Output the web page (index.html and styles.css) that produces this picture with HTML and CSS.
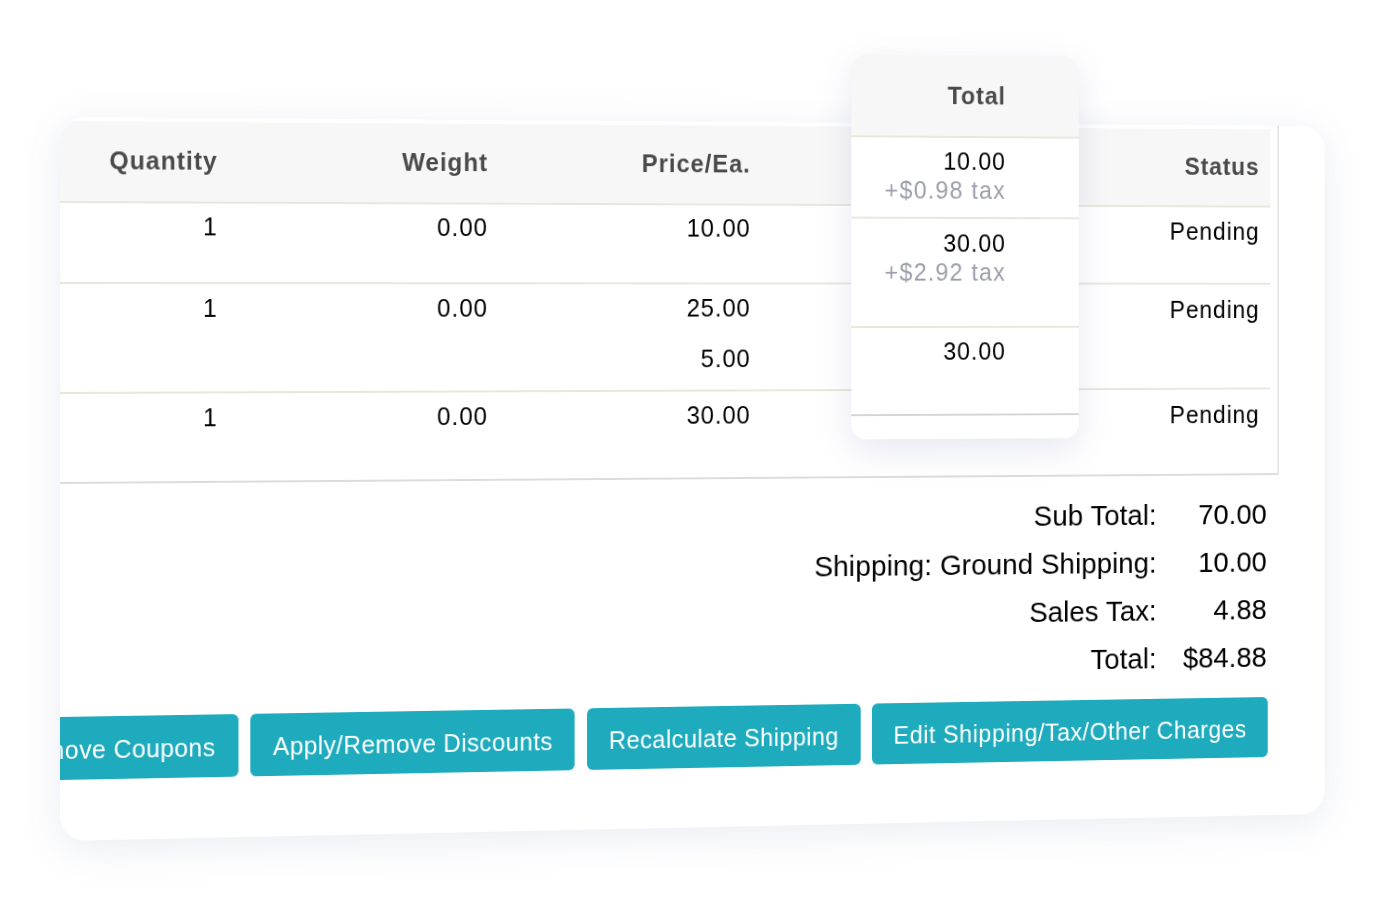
FILE: index.html
```html
<!DOCTYPE html>
<html>
<head>
    <title>Order items</title>
    <link rel="stylesheet" href="styles.css">
</head>
<body>
    <div class="stage">
        <div class="card">
            <div class="table-wrap">
                <table class="items">
                    <colgroup>
                        <col class="col-qty">
                        <col class="col-weight">
                        <col class="col-price">
                        <col class="col-total">
                        <col class="col-status">
                    </colgroup>
                    <thead>
                        <tr>
                            <th>Quantity</th>
                            <th>Weight</th>
                            <th>Price/Ea.</th>
                            <th></th>
                            <th>Status</th>
                        </tr>
                    </thead>
                    <tbody>
                        <tr class="row-one">
                            <td>1</td>
                            <td>0.00</td>
                            <td>10.00</td>
                            <td></td>
                            <td>Pending</td>
                        </tr>
                        <tr class="row-two">
                            <td>1</td>
                            <td>0.00</td>
                            <td>25.00<div class="price-extra">5.00</div></td>
                            <td></td>
                            <td>Pending</td>
                        </tr>
                        <tr class="row-three">
                            <td>1</td>
                            <td>0.00</td>
                            <td>30.00</td>
                            <td></td>
                            <td>Pending</td>
                        </tr>
                    </tbody>
                </table>
            </div>

            <div class="summary">
                <span>Sub Total:</span><span>70.00</span>
                <span>Shipping: Ground Shipping:</span><span>10.00</span>
                <span>Sales Tax:</span><span>4.88</span>
                <span>Total:</span><span>$84.88</span>
            </div>

            <div class="actions">
                <button class="action-btn">Apply/Remove Coupons</button>
                <button class="action-btn">Apply/Remove Discounts</button>
                <button class="action-btn">Recalculate Shipping</button>
                <button class="action-btn action-btn-wide">Edit Shipping/Tax/Other Charges</button>
            </div>
        </div>

        <!-- highlighted column, floats over the table -->
        <div class="total-pop">
            <div class="pop-head">Total</div>
            <div class="pop-row pop-row-one">10.00<div class="tax">+$0.98 tax</div></div>
            <div class="pop-row pop-row-two">30.00<div class="tax">+$2.92 tax</div></div>
            <div class="pop-row pop-row-three">30.00</div>
        </div>
    </div>
</body>
</html>
```

FILE: styles.css
```css
html, body {
    margin: 0;
    height: 100%;
    overflow: hidden;
    background-color: #fff;
}

body {
    padding: 117px 0 0 60px;
    box-sizing: border-box;
    font-family: "Liberation Sans", Arial, sans-serif;
    color: #000;
}

.stage {
    position: relative;
    width: 1333px;
    height: 724px;
    transform-origin: 0 181px;
    transform: perspective(1326px) rotateY(3deg);
}

.card {
    height: 100%;
    background-color: #fff;
    border-radius: 26px;
    overflow: hidden;
}

/* soft halo behind the card */
.stage::before {
    content: "";
    position: absolute;
    inset: 0;
    z-index: -1;
    border-radius: 26px;
    box-shadow: 0 8px 40px rgba(85, 95, 160, 0.12);
}

.table-wrap {
    box-sizing: border-box;
    width: 1282px;
    height: 367px;
    padding: 4px 8px 0 0;
    border-right: 1px solid #cfcfcf;
    border-bottom: 2px solid #dcdcdc;
}

.items {
    width: 1273px;
    table-layout: fixed;
    border-collapse: separate;
    border-spacing: 0;
    font-size: 25px;
    letter-spacing: 1px;
}

.col-qty { width: 172px; }
.col-weight { width: 277px; }
.col-price { width: 275px; }
.col-total { width: 270px; }
.col-status { width: 279px; }

.items th {
    height: 82px;
    padding: 0 13px 2px 0;
    box-sizing: border-box;
    text-align: right;
    background-color: #f7f7f7;
    color: #4a4a4a;
    border-bottom: 2px solid #e9e7dc;
}

.items td {
    padding: 8px 13px 0 0;
    box-sizing: border-box;
    text-align: right;
    vertical-align: top;
    line-height: 30px;
}

.items th:last-child,
.items td:last-child {
    padding-right: 12px;
}

.items td:last-child {
    line-height: 34px;
}

.row-one td,
.row-two td {
    border-bottom: 2px solid #e9e7dc;
}

.row-one td { height: 81px; }
.row-two td { height: 110px; padding-top: 9px; }
.row-three td { height: 89px; padding-top: 9px; }

.price-extra {
    margin-top: 22px;
}

.summary {
    display: grid;
    grid-template-columns: auto 96px;
    column-gap: 25px;
    justify-content: end;
    padding: 16px 64px 0 0;
    font-size: 30px;
    letter-spacing: 0.1px;
    line-height: 50px;
    text-align: right;
}

.actions {
    display: flex;
    justify-content: flex-end;
    gap: 12.5px;
    margin-top: 17px;
    padding-right: 63px;
}

.action-btn {
    flex: none;
    height: 63px;
    padding: 4px 23px 0;
    border: none;
    border-radius: 6px;
    background-color: #1eabbd;
    color: #fff;
    font-family: inherit;
    font-size: 25px;
    letter-spacing: 0.4px;
}

.action-btn-wide {
    letter-spacing: 0.64px;
}

.total-pop {
    position: absolute;
    z-index: 1;
    top: -71px;
    left: 818px;
    width: 245px;
    height: 398px;
    background-color: #fff;
    border-radius: 16px;
    overflow: hidden;
    font-size: 25px;
    letter-spacing: 1px;
    text-align: right;
}

.stage::after {
    content: "";
    position: absolute;
    top: -71px;
    left: 818px;
    width: 245px;
    height: 398px;
    border-radius: 16px;
    box-shadow: 0 12px 36px rgba(85, 95, 160, 0.14);
}

.pop-head {
    box-sizing: border-box;
    height: 86px;
    line-height: 84px;
    padding-right: 79px;
    font-weight: bold;
    color: #4a4a4a;
    background-color: #f7f7f7;
    border-bottom: 2px solid #e9e7dc;
}

.pop-row {
    box-sizing: border-box;
    padding: 9px 79px 0 0;
    line-height: 30px;
    border-bottom: 2px solid #e9e7dc;
}

.pop-row-one { height: 84px; }
.pop-row-two { height: 113px; padding-top: 10px; }
.pop-row-three { height: 91px; border-bottom-color: #d5d5d5; }

.tax {
    color: #9a9ea8;
    letter-spacing: 1.3px;
}
```
